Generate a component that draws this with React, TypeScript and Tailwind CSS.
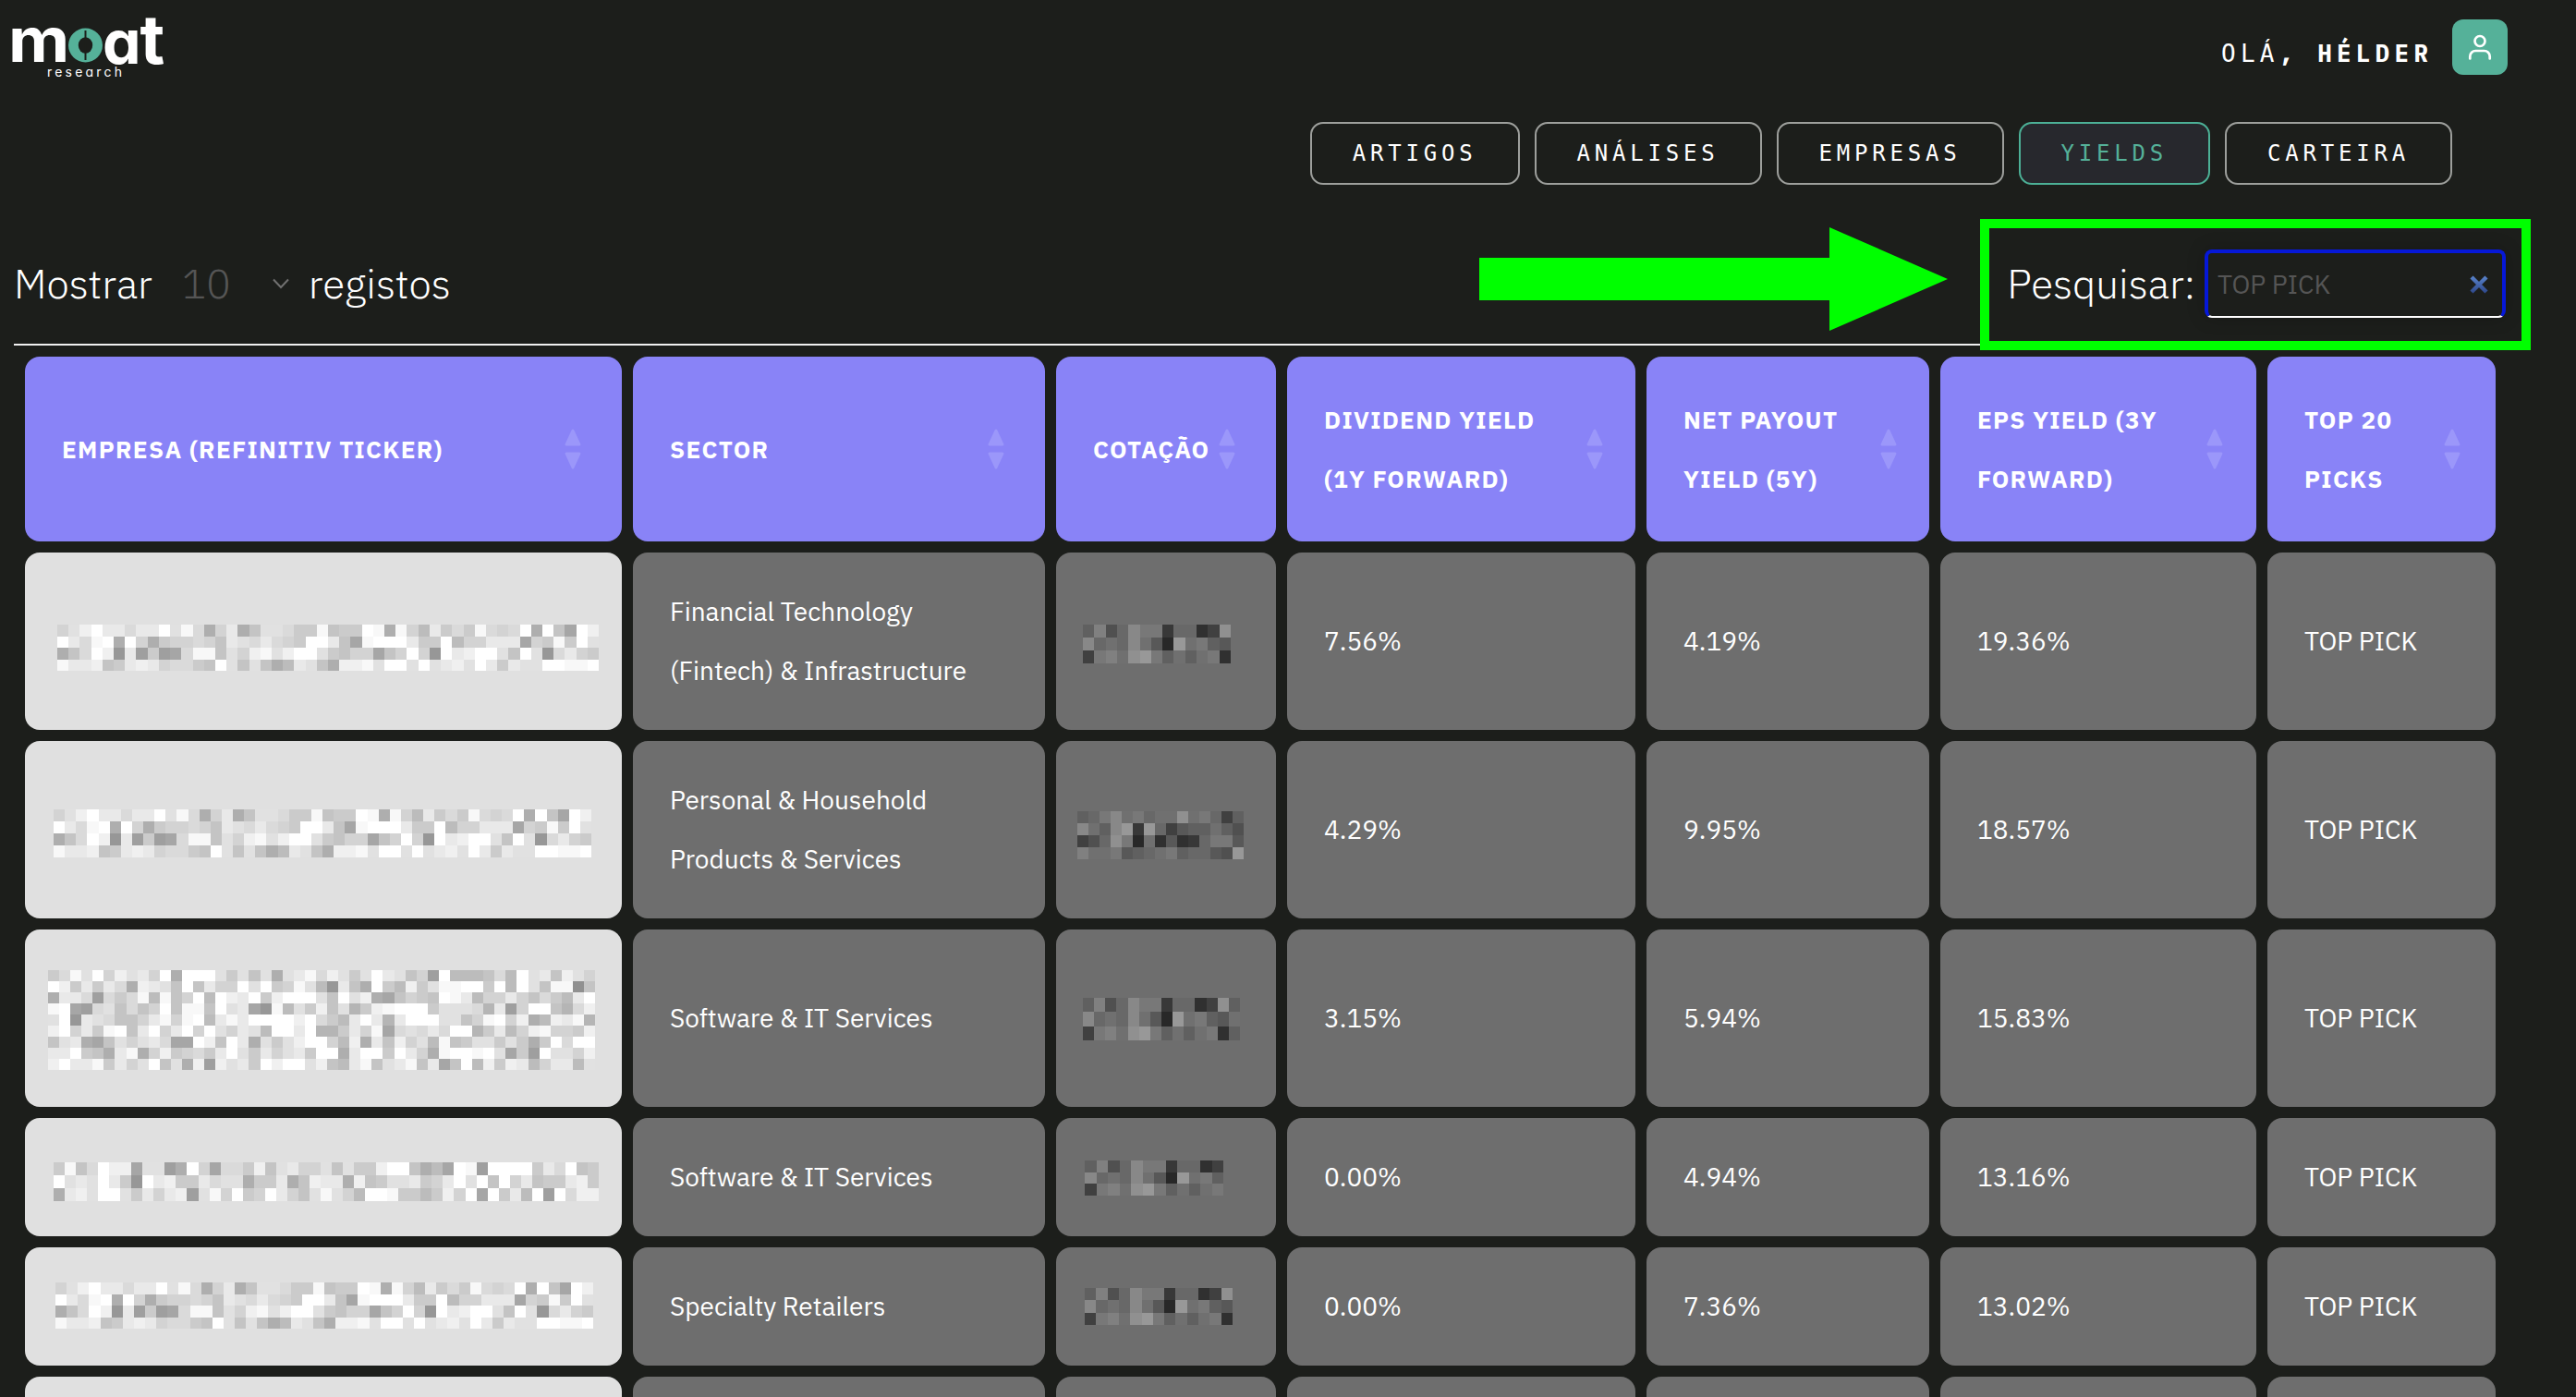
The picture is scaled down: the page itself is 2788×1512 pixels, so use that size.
import clsx from "clsx";

const SANS = "font-['IBM_Plex_Sans',Roboto,'Noto_Sans',sans-serif]";
const MONO = "font-['DejaVu_Sans_Mono','Liberation_Mono',monospace]";
const MONO_BOLD = "font-['IBM_Plex_Mono','Liberation_Mono',monospace] font-bold";

// one hex digit per block, 0 is the darkest shade
const nameShort = [
  "9bdfccaccfbea49c47bba88e788fe4e96c8a8ea9af4f73fd",
  "fcaef4f94899a97cbaca98ffc73efffc88f699ccc398e8fb",
  "47afd1c2823aee7b9debdffb8799379f91fcdffb7fb1ac98",
  "eccd78cdc9aa87fb7b746cb74ddebffbfbcdbfc8cbbffeef",
];
const nameTall = [
  "8aebf9dbc9f4fffb8b7b4bceadb8bfcb792f6667a6fbc7db9",
  "fd8c8ca4dcb7f7c99fbf89eb61c74f86d8beeff8f6fb7ee07",
  "4cca2a8ae6e79f6fdcf8dfffb7fbd437987fec699c97a86cf",
  "ef32ab7a79f7ee7fbc31e6b8d7b58defff8bbba5c29ff75ad",
  "bf1cba779ce9ef6cecffffdfa86cfc5cfffbb79ef9d46dce5",
  "df9c8ef7cf9cf9fb9cb6ffcf558c9e3abacaff58c69de998d",
  "7bc437b9bca33fd7fc4b8bdff96d4c7d9b6e78bb8b848faff",
  "ccf874ce49d89a8cfb8c9bc8ff4cff8fc94effefb382fbb9d",
  "dfcce8c9bf7b4d2dbc8fdffbd76ce7bce7c37f6d8dc69cc6b",
];
const nameThin = [
  "8e7afdd3bb24f93aa8d7bc99b7b88dff7463fe2ffff8caf78",
  "fbcbfc81fcd88cabb488c47dcc4d78bbc89cfbf7f9c788cd8",
  "4cdbffb8c9cd2be9f89fc97beb96ffe8868d9f3f8c6f2fadd",
];
const priceWide = ["78ac9a899d9a837", "c97ce2e83677975", "358da0916128aa6", "b99a6789a78865e"];
const priceLong = ["7b58caa28813d7", "c898c960e9a769", "3ab9dea7979a17"];
const pricePlain = priceLong.map((r) => r.slice(0, 13));
const priceShort = priceLong.map((r) => r.slice(0, 12));

interface Mosaic {
  cells: string[];
  className: string;
}

interface Row {
  height: string;
  name?: Mosaic;
  price?: Mosaic;
  sector: string[];
  dividend: string;
  payout: string;
  eps: string;
  pick: string;
}

const rows: Row[] = [
  {
    height: "h-[192px]",
    name: { cells: nameShort, className: "ml-[35px] mt-[78px] w-[586px] h-[50px]" },
    price: { cells: pricePlain, className: "ml-[29px] mt-[78px] w-[160px] h-[42px]" },
    sector: ["Financial Technology", "(Fintech) & Infrastructure"],
    dividend: "7.56%",
    payout: "4.19%",
    eps: "19.36%",
    pick: "TOP PICK",
  },
  {
    height: "h-[192px]",
    name: { cells: nameShort, className: "ml-[31px] mt-[74px] w-[582px] h-[52px]" },
    price: { cells: priceWide, className: "ml-[23px] mt-[76px] w-[180px] h-[52px]" },
    sector: ["Personal & Household", "Products & Services"],
    dividend: "4.29%",
    payout: "9.95%",
    eps: "18.57%",
    pick: "TOP PICK",
  },
  {
    height: "h-[192px]",
    name: { cells: nameTall, className: "ml-[25px] mt-[44px] w-[592px] h-[108px]" },
    price: { cells: priceLong, className: "ml-[29px] mt-[74px] w-[170px] h-[46px]" },
    sector: ["Software & IT Services"],
    dividend: "3.15%",
    payout: "5.94%",
    eps: "15.83%",
    pick: "TOP PICK",
  },
  {
    height: "h-[128px]",
    name: { cells: nameThin, className: "ml-[31px] mt-[48px] w-[590px] h-[42px]" },
    price: { cells: priceShort, className: "ml-[31px] mt-[46px] w-[150px] h-[38px]" },
    sector: ["Software & IT Services"],
    dividend: "0.00%",
    payout: "4.94%",
    eps: "13.16%",
    pick: "TOP PICK",
  },
  {
    height: "h-[128px]",
    name: { cells: nameShort, className: "ml-[33px] mt-[38px] w-[582px] h-[50px]" },
    price: { cells: pricePlain, className: "ml-[31px] mt-[44px] w-[160px] h-[40px]" },
    sector: ["Specialty Retailers"],
    dividend: "0.00%",
    payout: "7.36%",
    eps: "13.02%",
    pick: "TOP PICK",
  },
  { height: "h-[128px]", sector: [], dividend: "", payout: "", eps: "", pick: "" },
];

const headers = [
  { lines: ["EMPRESA (REFINITIV TICKER)"], pad: "pr-11" },
  { lines: ["SECTOR"], pad: "pr-11" },
  { lines: ["COTAÇÃO"], pad: "pr-11" },
  { lines: ["DIVIDEND YIELD", "(1Y FORWARD)"], pad: "pr-[35px]" },
  { lines: ["NET PAYOUT", "YIELD (5Y)"], pad: "pr-[35px]" },
  { lines: ["EPS YIELD (3Y", "FORWARD)"], pad: "pr-[36px]" },
  { lines: ["TOP 20", "PICKS"], pad: "pr-[38px]" },
];

const navItems = ["ARTIGOS", "ANÁLISES", "EMPRESAS", "YIELDS", "CARTEIRA"];

const GRID = "grid grid-cols-[646px_446px_238px_377px_306px_342px_247px] gap-x-3";

function Pixels({ cells, className, base, step }: Mosaic & { base: number; step: number }) {
  return (
    <svg
      className={clsx("shrink-0", className)}
      viewBox={`0 0 ${cells[0].length} ${cells.length}`}
      preserveAspectRatio="none"
      shapeRendering="crispEdges"
    >
      {cells.map((line, y) =>
        line.split("").map((c, x) => {
          const v = Math.round(base + parseInt(c, 16) * step);
          return <rect key={`${x}-${y}`} x={x} y={y} width={1} height={1} fill={`rgb(${v},${v},${v})`} />;
        })
      )}
    </svg>
  );
}

function Logo() {
  return (
    <div className="relative h-[100px] w-[180px] text-white font-[Inter,sans-serif]">
      <span className="absolute left-[4px] top-[18px] origin-left scale-x-110 text-[66px] leading-[50px] font-bold">m</span>
      <svg className="absolute left-[67px] top-[29px]" width="41" height="40" viewBox="0 0 41 40">
        <circle cx="20.5" cy="20" r="20.5" fill="#1c1e1b" />
        <circle cx="20.5" cy="20" r="18.5" fill="#55b199" />
        <ellipse cx="20.5" cy="20" rx="7.7" ry="8.7" fill="#1c1e1b" />
        <path d="M20.5 4v32" stroke="#1c1e1b" strokeWidth="2" />
      </svg>
      <span className="absolute left-[106px] top-[18px] flex items-baseline text-[66px] leading-[50px] font-bold [font-feature-settings:'cv11']">
        a<span className="-ml-px text-[73px]">t</span>
      </span>
      <span className="absolute left-[46px] top-[70px] text-[14px] leading-[16px] tracking-[3.2px] [font-feature-settings:'cv11']">
        research
      </span>
    </div>
  );
}

function SortIcon() {
  return (
    <svg className="shrink-0" width="18" height="44" viewBox="0 0 18 44" fill="#9b97fa">
      <path d="M9 .5c.8 0 1.300.8 1.700 1.800L17.300 16.500c.4 1-.1 2-1.200 2H1.900c-1.100 0-1.600-1-1.200-2L7.300 2.300C7.700 1.300 8.200.5 9 .5z" />
      <path d="M9 43.500c.8 0 1.300-.8 1.700-1.800L17.300 27.500c.4-1-.1-2-1.200-2H1.900c-1.100 0-1.600 1-1.200 2L7.300 41.700c.4 1 .9 1.800 1.700 1.800z" />
    </svg>
  );
}

function Cell({ lines }: { lines: string[] }) {
  return (
    <div className="flex flex-col justify-center rounded-2xl bg-[#6e6e6e] pl-10 text-[28px] leading-[64px] whitespace-nowrap">
      {lines.map((l) => (
        <span key={l}>{l}</span>
      ))}
    </div>
  );
}

export default function App() {
  return (
    <div className={clsx("relative h-[1512px] w-[2788px] overflow-hidden bg-[#1c1e1b] text-white", SANS)}>
      <header className="flex h-[100px] justify-between pl-[5px] pr-[74px]">
        <Logo />
        <div className="flex items-start pt-[21px]">
          <p className={clsx("mr-[21px] text-[26px] leading-[72px] tracking-[5.2px] whitespace-pre", MONO)}>
            OLÁ<b className={MONO_BOLD}>, HÉLDER</b>
          </p>
          <div className="flex size-[60px] items-center justify-center rounded-xl bg-[#55b199]">
            <svg width="26" height="28" viewBox="0 0 26 28" fill="none" stroke="white" strokeWidth="2.7" strokeLinecap="round">
              <circle cx="13" cy="7.5" r="5.5" />
              <path d="M2.300 26.500v-2.500a6 6 0 0 1 6-6h9.400a6 6 0 0 1 6 6v2.500" />
            </svg>
          </div>
        </div>
      </header>

      <nav className="mt-8 flex h-[68px] justify-end gap-4 pr-[134px]">
        {navItems.map((item) => (
          <a
            key={item}
            className={clsx(
              "flex items-center rounded-[14px] border-2 px-11 text-[24px] tracking-[4.8px]",
              MONO,
              item === "YIELDS" ? "border-[#4cb096] bg-[#27282d] text-[#55b199]" : "border-[#9d9f9c]"
            )}
          >
            {item}
          </a>
        ))}
      </nav>

      <div className="flex h-[172px] items-center justify-between pl-[15px] pr-[76px] pt-[42px] text-[44px] font-light">
        <div className="flex items-center">
          <span>Mostrar</span>
          <span className="ml-[32px] text-[#555]">10</span>
          <svg className="ml-[45px] mr-[21px]" width="18" height="12" viewBox="0 0 18 12" fill="none" stroke="#707070" strokeWidth="2">
            <path d="M1 1.500l8 8.500 8-8.500" />
          </svg>
          <span>registos</span>
        </div>
        <div className="flex items-center">
          <span>Pesquisar:</span>
          <div className="ml-[10px] flex h-[74px] w-[326px] items-center justify-between rounded-lg border-4 border-b-2 border-[#0618d8] border-b-white pl-[10px] pr-[15px] text-[28px] font-normal text-[#555] shadow-[0_0_20px_rgba(0,0,0,0.2)]">
            <span>TOP PICK</span>
            <svg width="20" height="20" viewBox="0 0 20 20" strokeWidth="4.5">
              <linearGradient id="clear" gradientUnits="userSpaceOnUse" x1="0" y1="0" x2="0" y2="20">
                <stop offset="0" stopColor="#5b86cf" />
                <stop offset="1" stopColor="#2c4587" />
              </linearGradient>
              <path d="M2 2l16 16M18 2L2 18" stroke="url(#clear)" />
            </svg>
          </div>
        </div>
      </div>

      <main className="ml-[15px] flex w-[2698px] flex-col gap-3 border-t-2 border-[#f0f0f0] pl-3 pt-3">
        <div className={clsx(GRID, "h-[200px]")}>
          {headers.map(({ lines, pad }) => (
            <div
              key={lines[0]}
              className={clsx(
                "flex items-center justify-between rounded-2xl bg-[#8983f7] pl-10 text-[26px] font-bold leading-[64px] tracking-[1.3px] whitespace-nowrap",
                pad
              )}
            >
              <div className="flex flex-col">
                {lines.map((l) => (
                  <span key={l}>{l}</span>
                ))}
              </div>
              <SortIcon />
            </div>
          ))}
        </div>
        {rows.map((row, i) => (
          <div key={i} className={clsx(GRID, row.height)}>
            <div className="flex items-start rounded-2xl bg-[#e0e0e0]">
              {row.name && <Pixels {...row.name} base={144} step={7.4} />}
            </div>
            <Cell lines={row.sector} />
            <div className="flex items-start rounded-2xl bg-[#6e6e6e]">
              {row.price && <Pixels {...row.price} base={40} step={8} />}
            </div>
            <Cell lines={[row.dividend]} />
            <Cell lines={[row.payout]} />
            <Cell lines={[row.eps]} />
            <Cell lines={[row.pick]} />
          </div>
        ))}
      </main>

      {/* highlight over the search field */}
      <svg className="absolute left-[1600px] top-[246px]" width="508" height="112" viewBox="0 0 508 112" fill="#00ff00">
        <path d="M1 33H380V0L508 56L380 112V79H1z" />
      </svg>
      <div className="absolute left-[2143px] top-[237px] h-[142px] w-[596px] border-[10px] border-[#00ff00]" />
    </div>
  );
}
